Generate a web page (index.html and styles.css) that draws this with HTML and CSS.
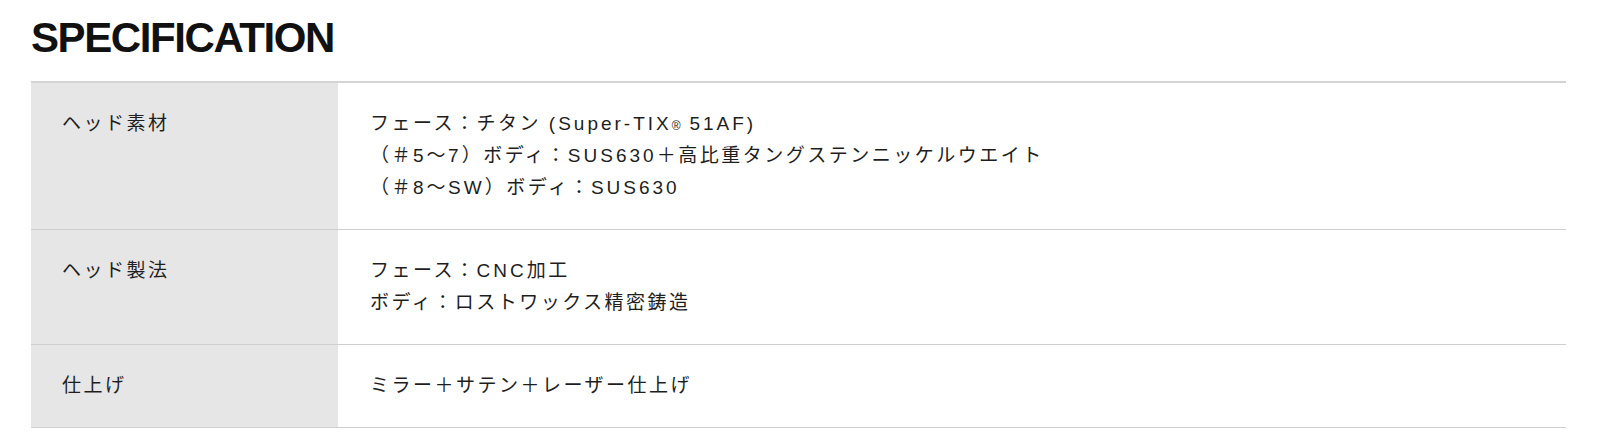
FILE: index.html
```html
<!DOCTYPE html>
<html lang="ja">
<head>
<meta charset="utf-8">
<title>SPECIFICATION</title>
<link rel="stylesheet" href="styles.css">
</head>
<body>
<section class="spec">
  <h2 class="spec-title">SPECIFICATION</h2>
  <table class="spec-table">
    <tr>
      <th>ヘッド素材</th>
      <td>フェース：チタン <span class="en">(Super-TIX</span><span class="reg">®</span> <span class="en">51AF)</span><br>（＃<span class="en">5</span>〜<span class="en">7</span>）ボディ：<span class="en">SUS630</span>＋高比重タングステンニッケルウエイト<br>（＃<span class="en">8</span>〜<span class="en">SW</span>）ボディ：<span class="en">SUS630</span></td>
    </tr>
    <tr>
      <th>ヘッド製法</th>
      <td>フェース：<span class="en">CNC</span>加工<br>ボディ：ロストワックス精密鋳造</td>
    </tr>
    <tr>
      <th>仕上げ</th>
      <td>ミラー＋サテン＋レーザー仕上げ</td>
    </tr>
  </table>
</section>
</body>
</html>
```

FILE: styles.css
```css
html, body {
  margin: 0;
  padding: 0;
  background: #ffffff;
}

body {
  font-family: "Liberation Sans", "Noto Sans CJK JP", sans-serif;
  color: #1e1e1e;
}

.spec {
  padding: 14px 34px 0 31px;
}

.spec-title {
  margin: 0 0 19px 0;
  font-size: 42px;
  line-height: 48px;
  font-weight: 700;
  letter-spacing: -1.4px;
  color: #111111;
}

.spec-table {
  width: 100%;
  border-collapse: collapse;
  border-top: 2px solid #d4d4d4;
}

.spec-table th,
.spec-table td {
  vertical-align: top;
  text-align: left;
  font-size: 19px;
  line-height: 32px;
  letter-spacing: 2.5px;
  font-weight: 400;
  padding: 25px 0 25px 31px;
  border-bottom: 1px solid #cfcfcf;
}

.spec-table th {
  width: 276px;
  background: #e6e6e6;
  color: #1e1e1e;
}

.spec-table td {
  padding-left: 32px;
  background: #ffffff;
}

.en {
  letter-spacing: 3px;
}

.reg {
  font-size: 12px;
  line-height: 0;
  letter-spacing: 1px;
}
```
